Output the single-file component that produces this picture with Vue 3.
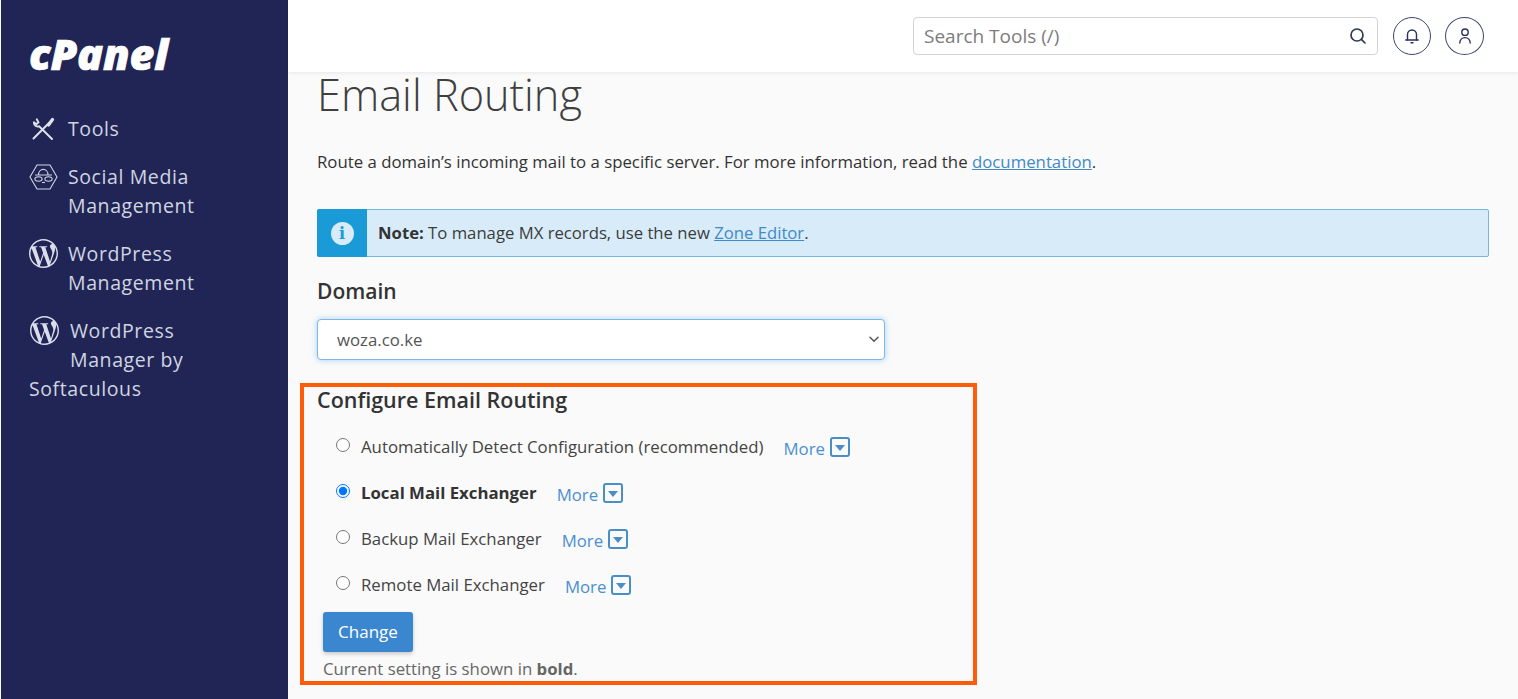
<script setup>
const nav = [
  { id: 'tools', lines: 'Tools', icon: 'tools' },
  { id: 'social', lines: 'Social Media Management', icon: 'social' },
  { id: 'wp', lines: 'WordPress Management', icon: 'wp' },
  { id: 'wpm', lines: 'WordPress Manager by Softaculous', icon: 'wp', wide: true }
]
const options = [
  { label: 'Automatically Detect Configuration (recommended)', selected: false },
  { label: 'Local Mail Exchanger', selected: true },
  { label: 'Backup Mail Exchanger', selected: false },
  { label: 'Remote Mail Exchanger', selected: false }
]
const wp = 'M21.469 6.825c.84 1.537 1.318 3.3 1.318 5.175 0 3.979-2.156 7.456-5.363 9.325l3.295-9.527c.615-1.54.82-2.771.82-3.864 0-.405-.026-.78-.07-1.11m-7.981.105c.647-.03 1.232-.105 1.232-.105.582-.075.514-.93-.067-.899 0 0-1.755.135-2.88.135-1.064 0-2.85-.15-2.85-.15-.585-.03-.661.855-.075.885 0 0 .54.061 1.125.09l1.68 4.605-2.37 7.08L5.354 6.9c.649-.03 1.234-.1 1.234-.1.585-.075.516-.93-.065-.896 0 0-1.746.138-2.874.138-.2 0-.438-.008-.69-.015C4.911 3.15 8.235 1.215 12 1.215c2.809 0 5.365 1.072 7.286 2.833-.046-.003-.091-.009-.141-.009-1.06 0-1.812.923-1.812 1.914 0 .89.513 1.643 1.06 2.531.411.72.89 1.643.89 2.977 0 .915-.354 1.994-.821 3.479l-1.075 3.585-3.9-11.61.001.014zM12 22.784c-1.059 0-2.081-.153-3.048-.437l3.237-9.406 3.315 9.087c.024.053.05.101.078.149-1.12.393-2.325.609-3.582.609M1.211 12c0-1.564.336-3.05.935-4.39L7.29 21.709C3.694 19.96 1.212 16.271 1.211 12M12 0C5.385 0 0 5.385 0 12s5.385 12 12 12 12-5.385 12-12S18.615 0 12 0'
</script>

<template>
  <div class="app">
    <aside class="sidebar">
      <div class="logo">cPanel</div>
      <nav class="nav">
        <a v-for="item in nav" :key="item.id" class="nav-item" :class="[item.id, { wide: item.wide }]">
          <span class="nav-icon">
            <svg v-if="item.icon === 'tools'" width="24" height="24" viewBox="0 0 24 24" fill="none" stroke="#dfe3ec" stroke-width="2" stroke-linecap="round">
              <path d="M21.5 2.5 L2.5 21.5" />
              <path d="M21.5 2.5 L17.5 8" stroke-width="3.2" />
              <path d="M3 5.5 A4 4 0 0 0 8.2 9.4 L21 22" />
              <path d="M3 5.5 L5.6 7 L7.4 5.4 L5.8 2.4" />
            </svg>
            <svg v-else-if="item.icon === 'social'" width="29" height="26" viewBox="0 0 29 26" fill="none" stroke="#cfd5e2" stroke-width="1.1">
              <path d="M8 1 H21 L28 13 L21 25 H8 L1 13 Z" />
              <path d="M9.5 11 C9.5 3.5 19 3.5 19 11 M6 11 H23" />
              <ellipse cx="9.5" cy="15" rx="3.6" ry="2.2" />
              <ellipse cx="19.5" cy="15" rx="3.6" ry="2.2" />
              <path d="M13 18.5 H16" />
            </svg>
            <svg v-else width="29" height="29" viewBox="0 0 24 24" fill="#d9deea"><path :d="wp" /></svg>
          </span>{{ item.lines }}
        </a>
      </nav>
    </aside>

    <div class="page">
      <header class="topbar">
        <div class="search">
          <span>Search Tools (/)</span>
          <svg width="18" height="18" viewBox="0 0 18 18" fill="none" stroke="#2b3a4d" stroke-width="1.7" stroke-linecap="round">
            <circle cx="8" cy="8" r="6" />
            <path d="M12.6 12.6 L16 16" />
          </svg>
        </div>
        <button class="round bell">
          <svg width="18" height="18" viewBox="0 0 18 18" fill="none" stroke="#2a2f5c" stroke-width="1.4" stroke-linecap="round">
            <path d="M4.5 13 V7.5 A4.5 4.5 0 0 1 13.5 7.5 V13" />
            <path d="M2.8 13 H15.2" />
            <path d="M8 15.8 H10" />
          </svg>
        </button>
        <button class="round">
          <svg width="18" height="18" viewBox="0 0 18 18" fill="none" stroke="#2a2f5c" stroke-width="1.4" stroke-linecap="round">
            <circle cx="9" cy="5.2" r="3.2" />
            <path d="M3.8 16 C3.8 8.8 14.2 8.8 14.2 16" />
          </svg>
        </button>
      </header>

      <main class="content">
        <h1>Email Routing</h1>
        <p class="intro">Route a domain’s incoming mail to a specific server. For more information, read the <a>documentation</a>.</p>

        <div class="note">
          <div class="note-icon"><span>i</span></div>
          <div class="note-text"><b>Note:</b> To manage MX records, use the new <a>Zone Editor</a>.</div>
        </div>

        <h2>Domain</h2>
        <div class="select-wrap">
          <select class="domain">
            <option>woza.co.ke</option>
          </select>
          <svg class="chevron" width="10" height="7" viewBox="0 0 10 7" fill="none" stroke="#555" stroke-width="1.5" stroke-linecap="round">
            <path d="M1 1.2 L5 5.2 L9 1.2" />
          </svg>
        </div>

        <section class="routing">
          <h3>Configure Email Routing</h3>
          <div class="options">
            <div v-for="opt in options" :key="opt.label" class="option">
              <input type="radio" name="routing" :checked="opt.selected" />
              <label :class="{ current: opt.selected }">{{ opt.label }}</label>
              <a class="more">More<span class="more-box"><i></i></span></a>
            </div>
          </div>
          <button class="change">Change</button>
          <p class="hint">Current setting is shown in <b>bold</b>.</p>
        </section>
      </main>
    </div>
  </div>
</template>

<style scoped>
.app {
  display: flex;
  height: 699px;
  overflow: hidden;
  background: #fafafa;
  font-family: "Open Sans", sans-serif;
  color: #333;
}
.sidebar {
  width: 287px;
  flex: none;
  margin-left: 1px;
  background: #202556;
  color: #d0d5e0;
}
.logo {
  height: 78px;
  padding: 28px 0 0 28px;
  box-sizing: border-box;
  font-size: 43px;
  line-height: 52px;
  font-weight: 800;
  font-style: italic;
  letter-spacing: -0.2px;
  -webkit-text-stroke: 0.7px #fff;
  color: #fff;
}
.nav {
  display: flex;
  flex-direction: column;
  gap: 19px;
  padding: 36px 60px 0 28px;
}
.nav-item {
  display: block;
  font-size: 19.5px;
  line-height: 29px;
  letter-spacing: 0.6px;
  color: #d0d5e0;
}
.nav-icon {
  float: left;
  width: 39px;
  height: 40px;
  display: block;
}
.nav-item.tools .nav-icon {
  height: 29px;
}
.nav-item.wide .nav-icon {
  width: 41px;
  padding-left: 1px;
  box-sizing: border-box;
}
.nav-icon svg {
  display: block;
}
.nav-item.tools .nav-icon svg {
  margin: 3px 0 0 2px;
}
.nav-item.social .nav-icon svg {
  margin-top: 2px;
}
.page {
  flex: 1;
  min-width: 0;
}
.topbar {
  height: 72px;
  background: #fff;
  box-shadow: 0 1px 4px rgba(0, 0, 0, 0.08);
  display: flex;
  align-items: center;
  justify-content: flex-end;
  gap: 14px;
  padding-right: 34px;
  box-sizing: border-box;
  position: relative;
}
.search {
  width: 465px;
  height: 38px;
  box-sizing: border-box;
  border: 1px solid #d2d2d2;
  border-radius: 4px;
  display: flex;
  align-items: center;
  justify-content: space-between;
  padding: 0 10px;
  font-size: 19px;
  color: #7c7c7c;
  margin-right: 1px;
}
.round {
  width: 39px;
  height: 38px;
  border: 1px solid #3f4570;
  border-radius: 50%;
  background: #fff;
  padding: 0;
  display: flex;
  align-items: center;
  justify-content: center;
}
.round.bell {
  width: 38px;
}
.content {
  padding: 0 29px;
}
h1 {
  margin: 0;
  font-size: 43.3px;
  line-height: 45px;
  font-weight: 300;
  color: #3f3f3f;
}
.intro {
  margin: 33px 0 0;
  font-size: 16.8px;
  line-height: 24px;
  color: #333;
}
a {
  color: #3f8ac9;
}
.intro a,
.note a {
  text-decoration: underline;
}
.note {
  margin-top: 35px;
  height: 48px;
  box-sizing: border-box;
  display: flex;
  border: 1px solid #7ab5de;
  border-radius: 2px;
  background: #d7ebf9;
}
.note-icon {
  width: 50px;
  margin: -1px 0 -1px -1px;
  background: #1a9bd8;
  border-radius: 2px 0 0 2px;
  display: flex;
  align-items: center;
  justify-content: center;
}
.note-icon span {
  width: 23px;
  height: 23px;
  border-radius: 50%;
  background: #d7ebf9;
  color: #1a9bd8;
  font-family: "DejaVu Serif", serif;
  font-weight: 700;
  font-size: 16px;
  line-height: 23px;
  text-align: center;
}
.note-text {
  padding-left: 11px;
  font-size: 16.7px;
  line-height: 46px;
  color: #3c3c3c;
}
.note-text b {
  color: #333;
}
h2 {
  margin: 20px 0 0;
  font-size: 21px;
  line-height: 28px;
  font-weight: 600;
  color: #333;
}
.select-wrap {
  position: relative;
  margin-top: 14px;
  width: 568px;
}
.domain {
  display: block;
  width: 100%;
  height: 41px;
  box-sizing: border-box;
  padding: 0 19px;
  border: 1px solid #7eb6e6;
  border-radius: 4px;
  background: #fff;
  box-shadow: 0 0 6px rgba(102, 175, 233, 0.55);
  font-family: "Open Sans", sans-serif;
  font-size: 16.8px;
  color: #555;
  appearance: none;
}
.chevron {
  position: absolute;
  right: 6px;
  top: 17px;
}
.routing {
  margin: 23px 0 0 -17px;
  width: 677px;
  height: 302px;
  box-sizing: border-box;
  border: 4px solid #ff5c0a;
  padding: 0 13px;
  overflow: hidden;
}
h3 {
  margin: 0;
  font-size: 21.5px;
  line-height: 25px;
  font-weight: 600;
  color: #333;
}
.options {
  margin-top: 23px;
  padding-left: 20px;
}
.option {
  height: 46px;
  display: flex;
  align-items: flex-start;
  font-size: 16.8px;
  line-height: 24px;
  color: #444;
}
.option input {
  width: 14px;
  height: 14px;
  margin: 3px 11px 0 -1px;
  flex: none;
}
.option label {
  margin-right: 20px;
}
.option label.current {
  font-weight: 700;
  color: #333;
}
.more {
  display: flex;
  align-items: flex-start;
  margin-top: 2px;
  font-size: 16.8px;
  color: #4a8fcf;
}
.more-box {
  width: 20px;
  height: 20px;
  box-sizing: border-box;
  margin: 0 0 0 5px;
  border: 2px solid #4a8ec8;
  border-radius: 3px;
  display: flex;
  align-items: center;
  justify-content: center;
  background: #fafafa;
}
.more-box i {
  border-left: 5px solid transparent;
  border-right: 5px solid transparent;
  border-top: 6px solid #4a8ec8;
  margin-top: 1px;
}
.change {
  display: block;
  margin: -7px 0 0 6px;
  width: 90px;
  height: 40px;
  border: 0;
  border-radius: 3px;
  background: #3b87cf;
  box-shadow: 0 2px 4px rgba(0, 0, 0, 0.2);
  color: #fff;
  font-family: "Open Sans", sans-serif;
  font-size: 17px;
  padding: 0 0 2px;
}
.hint {
  margin: 5px 0 0 6px;
  font-size: 16.8px;
  line-height: 24px;
  color: #666;
}
</style>
